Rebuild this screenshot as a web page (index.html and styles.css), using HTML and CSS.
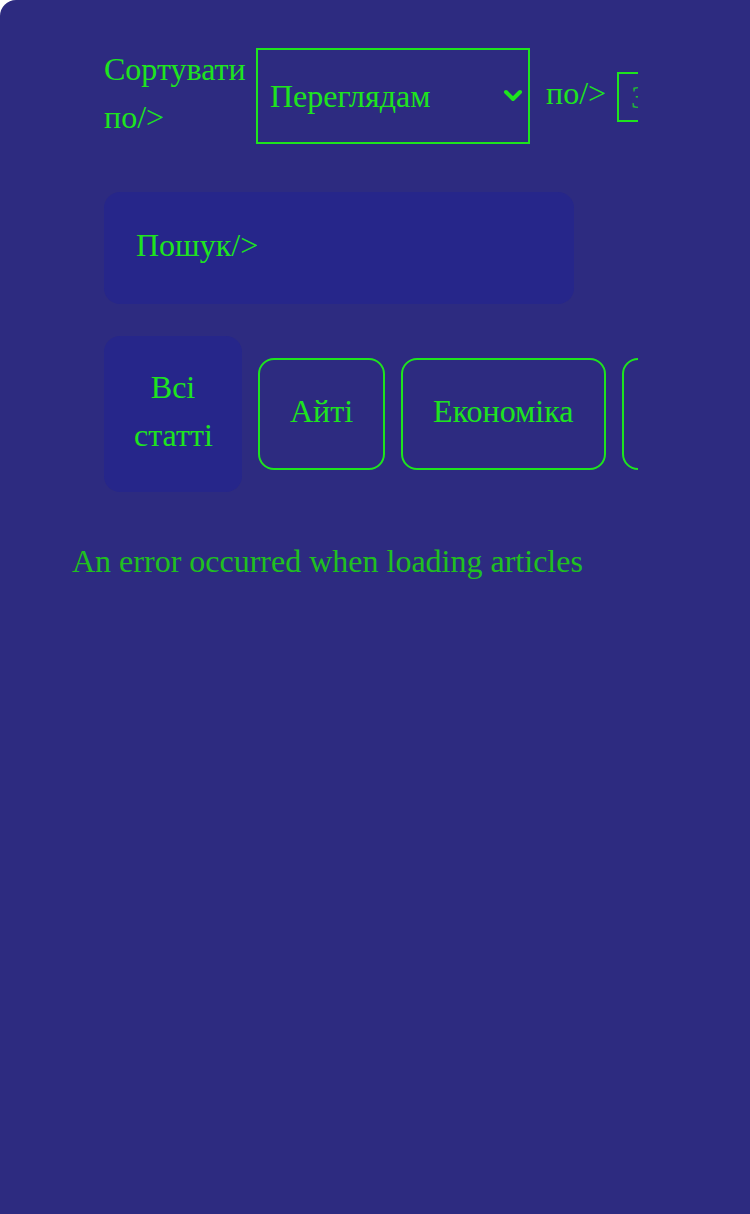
FILE: index.html
```html
<!DOCTYPE html>
<html lang="uk">
<head>
    <meta charset="UTF-8">
    <meta name="viewport" content="width=device-width, initial-scale=1.0">
    <title>Статті</title>
    <link rel="stylesheet" href="styles.css">
</head>
<body>
    <div class="page">
        <div class="controls">
            <div class="sort-row">
                <label class="sort-label" for="sort">Сортувати по/&gt;</label>
                <div class="select-wrap">
                    <select id="sort" class="sort-select">
                        <option>Переглядам</option>
                        <option>Даті</option>
                    </select>
                    <svg class="chevron" width="20" height="14" viewBox="0 0 20 14">
                        <path d="M3 4 L10 11 L17 4" fill="none" stroke="#1ee41e" stroke-width="4" stroke-linecap="round" stroke-linejoin="round"/>
                    </svg>
                </div>
                <label class="order-label" for="order">по/&gt;</label>
                <input id="order" class="order-input" type="text" placeholder="Зростанню">
            </div>

            <div class="search">Пошук/&gt;</div>

            <div class="chips">
                <button class="chip chip-active">Всі статті</button>
                <button class="chip">Айті</button>
                <button class="chip">Економіка</button>
                <button class="chip">Політика</button>
            </div>
        </div>

        <p class="error">An error occurred when loading articles</p>
    </div>
</body>
</html>
```

FILE: styles.css
```css
html, body {
    margin: 0;
    padding: 0;
    background: #ffffff;
}
.page {
    min-height: 1214px;
    box-sizing: border-box;
    background: #2d2b80;
    border-top-left-radius: 16px;
    padding: 48px 0 0 72px;
    font-family: "Liberation Serif", "Times New Roman", serif;
    font-size: 32px;
    line-height: 48px;
    color: #1ee41e;
}
.controls {
    width: 534px;
    margin-left: 32px;
    overflow: hidden;
}
.sort-row {
    display: flex;
    align-items: center;
}
.sort-label {
    width: 142px;
    flex-shrink: 0;
    margin: -6px 10px 0 0;
}
.select-wrap {
    position: relative;
    flex-shrink: 0;
}
.sort-select {
    appearance: none;
    -webkit-appearance: none;
    width: 274px;
    height: 96px;
    box-sizing: border-box;
    padding: 0 12px;
    border: 2px solid #1ee41e;
    border-radius: 0;
    background: transparent;
    color: #1ee41e;
    font: inherit;
    outline: none;
}
.chevron {
    position: absolute;
    right: 7px;
    top: 40px;
}
.order-label {
    flex-shrink: 0;
    margin: -6px 11px 0 16px;
}
.order-input {
    flex-shrink: 0;
    width: 200px;
    height: 50px;
    box-sizing: border-box;
    margin-top: 2px;
    padding: 0 12px;
    border: 2px solid #1ee41e;
    background: transparent;
    font: inherit;
    color: #1ee41e;
    outline: none;
}
.order-input::placeholder {
    color: #1ee41e;
    opacity: 0.75;
}
.search {
    width: 470px;
    box-sizing: border-box;
    margin-top: 48px;
    padding: 29px 32px 35px;
    background: #26268a;
    border-radius: 16px;
}
.chips {
    display: flex;
    align-items: center;
    gap: 16px;
    margin-top: 32px;
}
.chip {
    flex-shrink: 0;
    padding: 27px 30px 33px;
    border: 2px solid #1ee41e;
    border-radius: 16px;
    background: transparent;
    color: #1ee41e;
    font: inherit;
    line-height: 48px;
}
.chip-active {
    width: 138px;
    border-color: transparent;
    background: #26268a;
    padding: 25px 28px 31px;
}
.error {
    margin: 45px 0 0;
    color: #20c020;
}
```
